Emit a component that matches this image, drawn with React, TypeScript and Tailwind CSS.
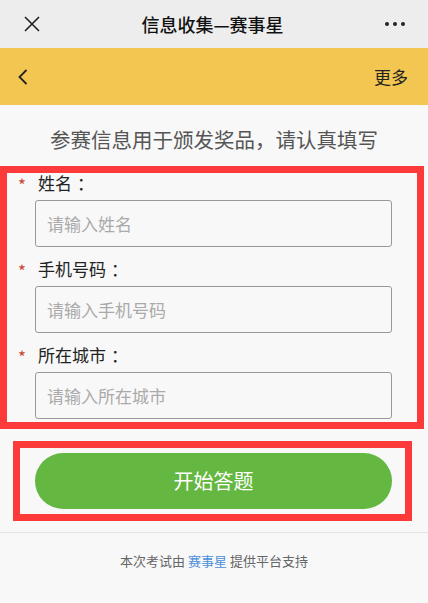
const fields = [
  { label: "姓名", placeholder: "请输入姓名" },
  { label: "手机号码", placeholder: "请输入手机号码" },
  { label: "所在城市", placeholder: "请输入所在城市" },
];

export default function App() {
  return (
    <main
      className="min-h-screen w-[428px] bg-[#f8f8f8] text-[#222]"
      style={{ fontFamily: '"Noto Sans CJK SC", "Noto Sans", sans-serif' }}
    >
      {/* wechat top bar */}
      <div className="flex h-12 items-center justify-between bg-[#ededed] pl-6 pr-[23px]">
        <svg width="16" height="16" viewBox="0 0 16 16" className="text-[#222]">
          <path d="M1 1 L15 15 M15 1 L1 15" stroke="currentColor" strokeWidth="1.6" fill="none" />
        </svg>
        <h1 className="text-[18px] font-medium leading-6 text-[#111]">信息收集—赛事星</h1>
        <div className="flex gap-[4px]">
          <span className="h-[4px] w-[4px] rounded-full bg-[#222]" />
          <span className="h-[4px] w-[4px] rounded-full bg-[#222]" />
          <span className="h-[4px] w-[4px] rounded-full bg-[#222]" />
        </div>
      </div>

      {/* yellow nav */}
      <div className="flex h-[57px] items-center justify-between bg-[#f3c652] pl-[18px] pr-5">
        <svg width="10" height="16" viewBox="0 0 10 16" className="text-[#222]">
          <path d="M8.5 1 L1.5 8 L8.5 15" stroke="currentColor" strokeWidth="1.8" fill="none" />
        </svg>
        <span className="text-[17px] leading-6 text-[#222]">更多</span>
      </div>

      <p className="pt-[22px] pb-[15px] text-center text-[20.5px] leading-6 text-[#555]">
        参赛信息用于颁发奖品，请认真填写
      </p>

      {/* form */}
      <div className="w-[424px] border-[7px] border-[#fc3a3a] pb-[3px]">
        {fields.map((f, i) => (
          <div key={f.label} className={i === 0 ? "" : "mt-3"}>
            <div className="flex h-5 items-center pl-[11px] text-[17px] leading-5">
              <span className="w-[20px] pt-[4px] text-[#c8472e]">*</span>
              <span>{f.label}</span>
              <span className="ml-[5px]">：</span>
            </div>
            <input
              placeholder={f.placeholder}
              className="ml-[28px] mt-[7px] h-[47px] w-[357px] rounded-[3px] border border-[#999] bg-[#f8f8f8] pl-[11px] pr-3 text-[17px] outline-none placeholder:text-[#aaa]"
            />
          </div>
        ))}
      </div>

      <div className="ml-[13px] mt-3 h-[80px] w-[399px] border-[7px] border-[#fc3a3a]">
        <button className="ml-[15px] mt-[5px] h-[56px] w-[357px] rounded-full bg-[#64b740] text-[20px] text-white">
          开始答题
        </button>
      </div>

      <div className="mt-[11px] border-t border-[#e2e2e2] pt-[18px] text-center text-[13px] leading-5 text-[#666]">
        本次考试由 <span className="text-[#4a8fdb]">赛事星</span> 提供平台支持
      </div>
    </main>
  );
}
